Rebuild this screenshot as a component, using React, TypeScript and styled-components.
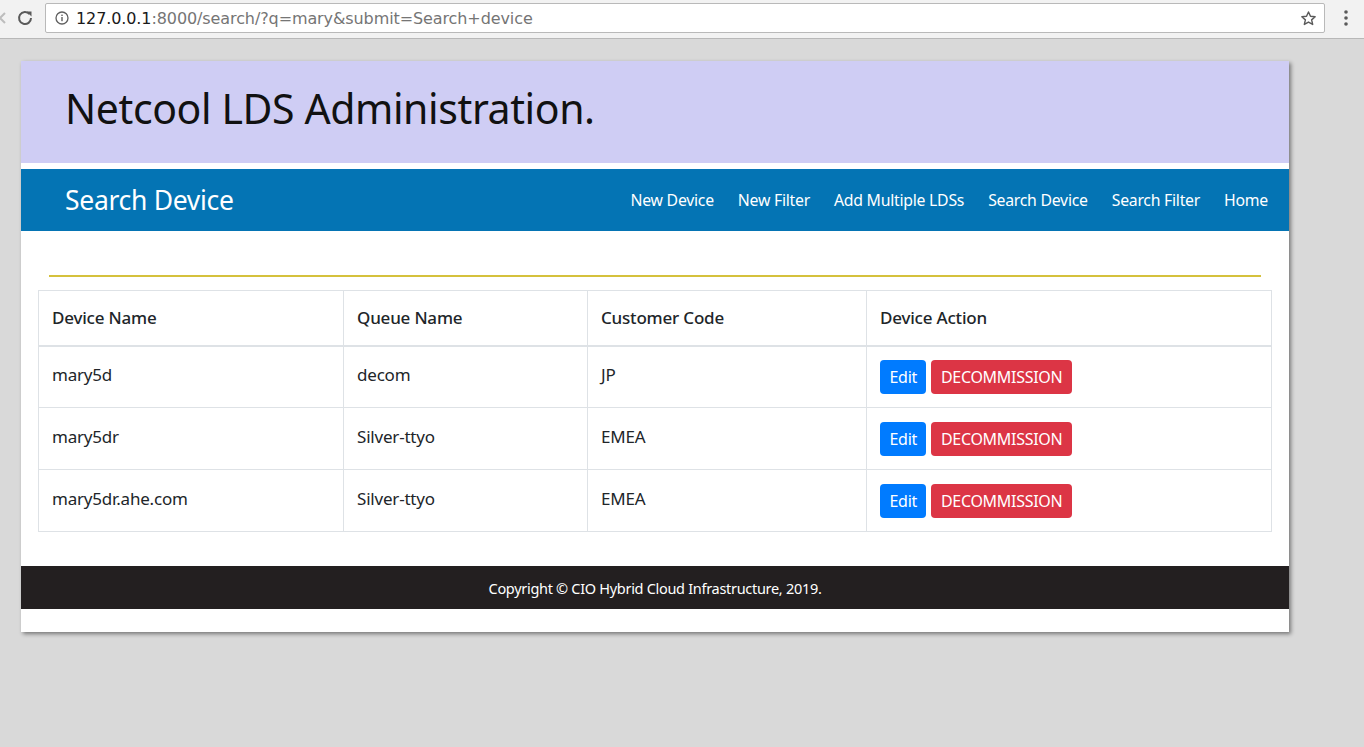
import React from 'react';
import styled, { createGlobalStyle } from 'styled-components';

const GlobalStyle = createGlobalStyle`
  html, body {
    margin: 0;
    padding: 0;
    background: #d9d9d9;
    font-family: "Noto Sans", "Open Sans", sans-serif;
  }
`;

type Device = {
  name: string;
  queue: string;
  customer: string;
};

const devices: Device[] = [
  { name: 'mary5d', queue: 'decom', customer: 'JP' },
  { name: 'mary5dr', queue: 'Silver-ttyo', customer: 'EMEA' },
  { name: 'mary5dr.ahe.com', queue: 'Silver-ttyo', customer: 'EMEA' },
];

const navLinks = ['New Device', 'New Filter', 'Add Multiple LDSs', 'Search Device', 'Search Filter', 'Home'];

const BackStub = () => (
  <svg width="6" height="16" viewBox="0 0 6 16">
    <path d="M5 3 L0 8 L5 13" fill="none" stroke="#bdbdbd" strokeWidth="2" />
  </svg>
);

const ReloadIcon = () => (
  <svg width="16" height="16" viewBox="0 0 16 16">
    <path d="M12.6 4.2A6 6 0 1 0 14 8" fill="none" stroke="#5a5a5a" strokeWidth="2" />
    <path d="M9.5 1.5 H14.5 V6.5 Z" fill="#5a5a5a" />
  </svg>
);

const InfoIcon = () => (
  <svg width="14" height="14" viewBox="0 0 14 14">
    <circle cx="7" cy="7" r="6" fill="none" stroke="#5f5f5f" strokeWidth="1.3" />
    <rect x="6.3" y="6" width="1.4" height="4.2" fill="#5f5f5f" />
    <rect x="6.3" y="3.6" width="1.4" height="1.4" fill="#5f5f5f" />
  </svg>
);

const StarIcon = () => (
  <svg width="17" height="17" viewBox="0 0 24 24">
    <path
      d="M12 2.8l2.8 6.1 6.6.6-5 4.4 1.5 6.5L12 17l-5.9 3.4 1.5-6.5-5-4.4 6.6-.6z"
      fill="none"
      stroke="#5a5a5a"
      strokeWidth="2"
      strokeLinejoin="round"
    />
  </svg>
);

const MenuDots = () => (
  <svg width="4" height="16" viewBox="0 0 4 16">
    <circle cx="2" cy="2" r="1.8" fill="#5a5a5a" />
    <circle cx="2" cy="8" r="1.8" fill="#5a5a5a" />
    <circle cx="2" cy="14" r="1.8" fill="#5a5a5a" />
  </svg>
);

const App = () => {
  return (
    <>
      <GlobalStyle />
      <BrowserBar>
        <BackStub />
        <ReloadButton>
          <ReloadIcon />
        </ReloadButton>
        <AddressField>
          <InfoIcon />
          <Url>
            <strong>127.0.0.1</strong>:8000/search/?q=mary&amp;submit=Search+device
          </Url>
          <StarIcon />
        </AddressField>
        <MenuButton>
          <MenuDots />
        </MenuButton>
      </BrowserBar>

      <Viewport>
        <Card>
          <Banner>
            <BannerTitle>Netcool LDS Administration.</BannerTitle>
          </Banner>
          <NavBar>
            <PageTitle>Search Device</PageTitle>
            <NavLinks>
              {navLinks.map(link => (
                <NavLink key={link}>{link}</NavLink>
              ))}
            </NavLinks>
          </NavBar>

          <Content>
            <Divider />
            <Table>
              <thead>
                <tr>
                  <Th style={{ width: 305 }}>Device Name</Th>
                  <Th style={{ width: 244 }}>Queue Name</Th>
                  <Th style={{ width: 279 }}>Customer Code</Th>
                  <Th>Device Action</Th>
                </tr>
              </thead>
              <tbody>
                {devices.map(device => (
                  <tr key={device.name}>
                    <Td>{device.name}</Td>
                    <Td>{device.queue}</Td>
                    <Td>{device.customer}</Td>
                    <ActionCell>
                      <Button variant="primary">Edit</Button>
                      <Button variant="danger">DECOMMISSION</Button>
                    </ActionCell>
                  </tr>
                ))}
              </tbody>
            </Table>
          </Content>

          <Footer>Copyright © CIO Hybrid Cloud Infrastructure, 2019.</Footer>
        </Card>
      </Viewport>
    </>
  );
};

export default App;

const BrowserBar = styled('div')`
  height: 39px;
  background: #f2f2f2;
  border-bottom: 1px solid #b8b8b8;
  display: flex;
  align-items: center;
  box-sizing: border-box;
  padding-bottom: 2px;
`;

const ReloadButton = styled('div')`
  width: 28px;
  height: 30px;
  display: flex;
  align-items: center;
  justify-content: center;
  margin: 0 6px 0 5px;
`;

const MenuButton = styled('div')`
  height: 30px;
  display: flex;
  align-items: center;
  margin-left: 19px;
`;

const AddressField = styled('div')`
  width: 1280px;
  height: 30px;
  box-sizing: border-box;
  background: #fff;
  border: 1px solid #b9b9b9;
  border-radius: 2px;
  display: flex;
  align-items: center;
  padding: 0 7px 0 9px;
  gap: 7px;
`;

const Url = styled('span')`
  flex: 1;
  font-family: "DejaVu Sans", sans-serif;
  font-size: 16px;
  color: #757575;
  white-space: nowrap;
  letter-spacing: -0.1px;
  strong {
    color: #1a1a1a;
    font-weight: normal;
  }
`;

const Viewport = styled('div')`
  padding: 22px 0 120px 21px;
`;

const Card = styled('div')`
  width: 1268px;
  background: #fff;
  box-shadow: 2px 2px 4px rgba(0, 0, 0, 0.45);
  padding-bottom: 23px;
`;

const Banner = styled('div')`
  height: 102px;
  box-sizing: border-box;
  background: #cfcdf4;
  display: flex;
  align-items: center;
  padding: 0 0 8px 44px;
  margin-bottom: 6px;
`;

const BannerTitle = styled('h1')`
  margin: 0;
  font-weight: 400;
  font-size: 41px;
  letter-spacing: -0.4px;
  color: #111;
`;

const NavBar = styled('div')`
  height: 62px;
  background: #0474b4;
  display: flex;
  align-items: center;
  justify-content: space-between;
  padding: 0 21px 0 44px;
`;

const PageTitle = styled('span')`
  color: #fff;
  font-size: 26.5px;
  letter-spacing: -0.3px;
`;

const NavLinks = styled('nav')`
  display: flex;
  gap: 24px;
`;

const NavLink = styled('a')`
  color: #fff;
  font-size: 15.8px;
  letter-spacing: -0.25px;
  cursor: pointer;
`;

const Content = styled('div')`
  padding: 44px 17px 34px;
`;

const Divider = styled('hr')`
  margin: 0 11px 13px;
  border: 0;
  border-top: 2px solid #d5c13c;
`;

const Table = styled('table')`
  width: 100%;
  border-collapse: collapse;
  color: #212529;
  font-size: 17px;
  letter-spacing: -0.2px;
`;

const Th = styled('th')`
  height: 55px;
  box-sizing: border-box;
  text-align: left;
  font-weight: 500;
  padding: 0 13px;
  border: 1px solid #dee2e6;
  border-bottom-width: 2px;
`;

const Td = styled('td')`
  height: 62px;
  box-sizing: border-box;
  padding: 0 13px 5px;
  border: 1px solid #dee2e6;
`;

const ActionCell = styled(Td)`
  padding-bottom: 0;
  padding-top: 1px;
`;

const Button = styled('button')<{ variant: 'primary' | 'danger' }>`
  height: 34px;
  padding: 0 9.5px;
  margin-right: 5px;
  border: 0;
  border-radius: 4px;
  font-family: inherit;
  font-size: 16px;
  letter-spacing: -0.3px;
  color: #fff;
  background: ${props => (props.variant === 'primary' ? '#007bff' : '#dc3545')};
  cursor: pointer;
`;

const Footer = styled('div')`
  height: 43px;
  background: #231f20;
  color: #fff;
  display: flex;
  align-items: center;
  justify-content: center;
  font-size: 14.5px;
  letter-spacing: -0.3px;
`;
